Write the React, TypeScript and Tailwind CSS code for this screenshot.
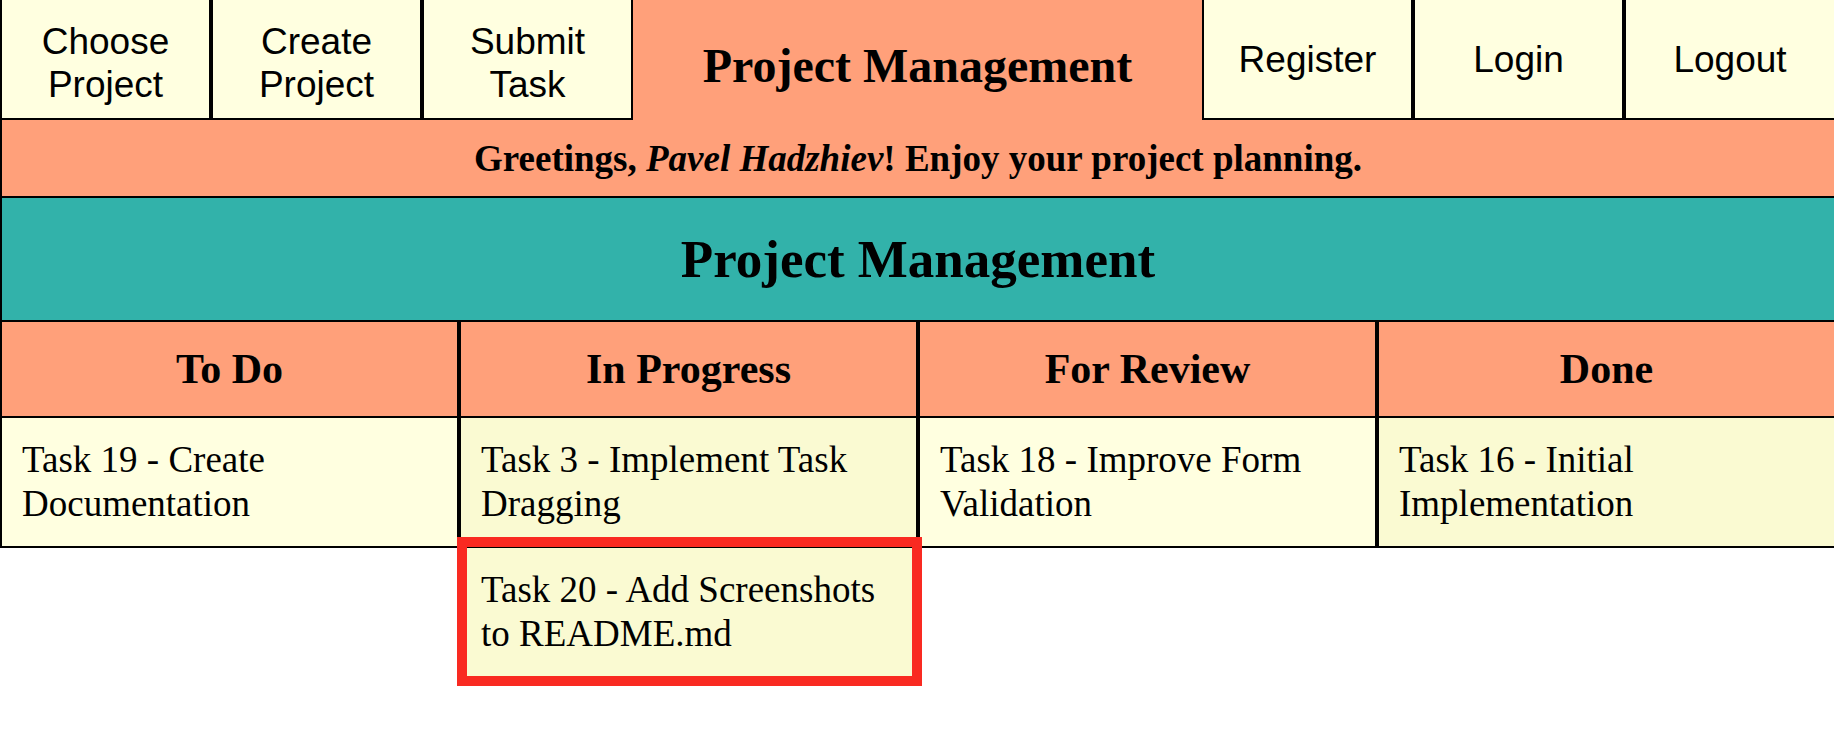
import React from 'react';

const navLeft = [['Choose', 'Project'], ['Create', 'Project'], ['Submit', 'Task']];
const navRight = ['Register', 'Login', 'Logout'];

type Column = {
  title: string;
  tint: string;
  tasks: { id: number; name: string; highlighted?: boolean }[];
};

const columns: Column[] = [
  { title: 'To Do', tint: 'bg-[#ffffe0]', tasks: [{ id: 19, name: 'Create Documentation' }] },
  {
    title: 'In Progress',
    tint: 'bg-[#fafad2]',
    tasks: [
      { id: 3, name: 'Implement Task Dragging' },
      { id: 20, name: 'Add Screenshots to README.md', highlighted: true },
    ],
  },
  { title: 'For Review', tint: 'bg-[#ffffe0]', tasks: [{ id: 18, name: 'Improve Form Validation' }] },
  { title: 'Done', tint: 'bg-[#fafad2]', tasks: [{ id: 16, name: 'Initial Implementation' }] },
];

function NavButton({
  children,
  last,
  twoLine,
}: {
  children: React.ReactNode;
  last?: boolean;
  twoLine?: boolean;
}) {
  return (
    <a
      href="#"
      className={`flex h-[120px] shrink-0 items-center justify-center border-2 border-t-0 border-black bg-[#ffffe0] text-center text-[37px] leading-[43px] text-black ${
        last ? 'w-[210px] border-r-0' : 'w-[211px]'
      } ${twoLine ? 'pt-[7px]' : ''}`}
    >
      {children}
    </a>
  );
}

function TaskColumn({ column, last }: { column: Column; last: boolean }) {
  return (
    <div className={`flex min-w-0 flex-1 flex-col border-l-2 border-black ${last ? '' : 'border-r-2'}`}>
      <h3 className="flex h-[96px] items-center justify-center border-b-2 border-black bg-[#ffa07a] text-[42px] font-bold leading-[48px]">
        {column.title}
      </h3>
      {column.tasks.map((t) => (
        <div
          key={t.id}
          className={`relative border-b-2 border-black px-[20px] py-[20px] text-[37px] leading-[44px] ${column.tint}`}
        >
          <p>
            Task {t.id} - {t.name}
          </p>
          {t.highlighted && (
            <div className="pointer-events-none absolute -bottom-[10px] -left-[4px] -right-[6px] -top-[11px] z-10 border-[10px] border-[#f92a21]" />
          )}
        </div>
      ))}
    </div>
  );
}

export default function App() {
  return (
    <div className="min-h-[738px] w-full overflow-hidden bg-white font-['Liberation_Serif',serif] text-black">
      <nav className="flex w-full bg-[#ffa07a] font-['Liberation_Sans',Arial,sans-serif]">
        {navLeft.map(([a, b]) => (
          <NavButton key={a} twoLine>
            {a}
            <br />
            {b}
          </NavButton>
        ))}
        <div className="flex-1 pt-[39px] text-center font-['Liberation_Serif',serif] text-[48px] font-bold leading-[53px]">
          Project Management
        </div>
        {navRight.map((label, i) => (
          <NavButton key={label} last={i === navRight.length - 1}>
            {label}
          </NavButton>
        ))}
      </nav>

      <div className="flex h-[78px] items-center justify-center border-b-2 border-l-2 border-black bg-[#ffa07a] text-[37px] font-bold leading-[43px]">
        <span>
          Greetings, <i>Pavel Hadzhiev</i>! Enjoy your project planning.
        </span>
      </div>

      <h2 className="flex h-[124px] items-center justify-center border-b-2 border-l-2 border-black bg-[#32b2aa] text-[53px] font-bold leading-[60px]">
        Project Management
      </h2>

      <div className="flex items-start">
        {columns.map((c, i) => (
          <TaskColumn key={c.title} column={c} last={i === columns.length - 1} />
        ))}
      </div>
    </div>
  );
}
